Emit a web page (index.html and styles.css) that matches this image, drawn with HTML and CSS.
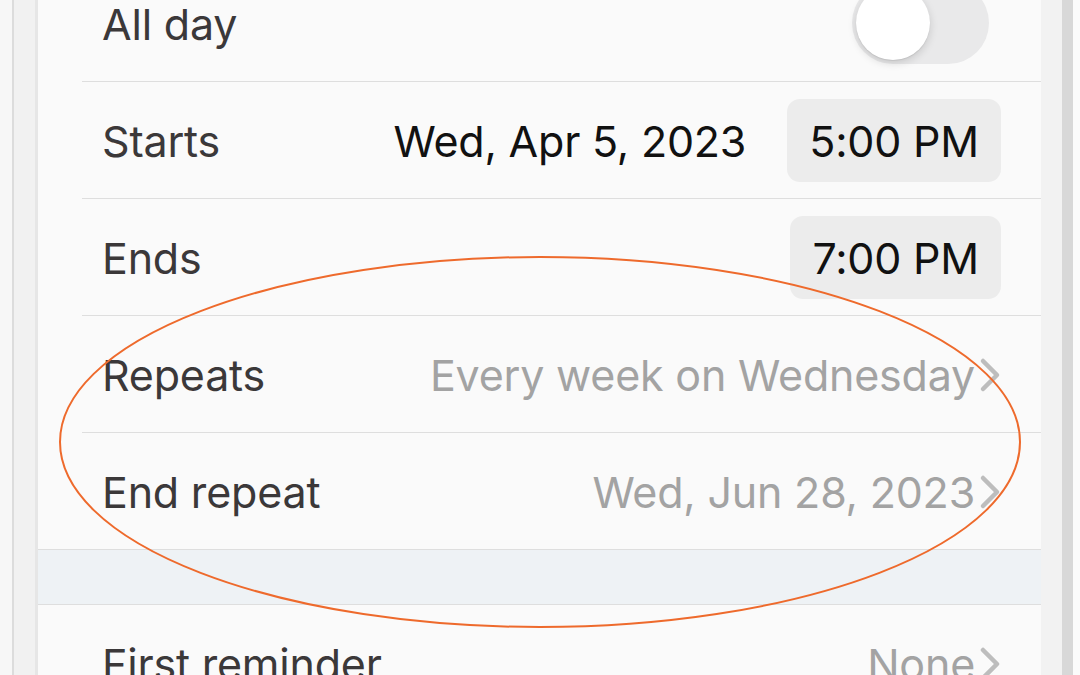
FILE: index.html
```html
<!DOCTYPE html>
<html lang="en">
<head>
    <meta charset="UTF-8">
    <meta name="viewport" content="width=device-width, initial-scale=1.0">
    <title>Event details</title>
    <link rel="stylesheet" href="styles.css">
</head>
<body>
    <div class="phone">
        <div class="frame frame-left">
            <div class="edge"></div>
            <div class="bezel"></div>
            <div class="rim"></div>
        </div>

        <div class="screen">
            <div class="group">
                <div class="row">
                    <span class="label">All day</span>
                    <div class="toggle"><div class="knob"></div></div>
                </div>
                <div class="row">
                    <span class="label">Starts</span>
                    <div class="values">
                        <span class="date">Wed, Apr 5, 2023</span>
                        <span class="pill">5:00 PM</span>
                    </div>
                </div>
                <div class="row">
                    <span class="label">Ends</span>
                    <div class="values">
                        <span class="pill">7:00 PM</span>
                    </div>
                </div>
                <div class="row">
                    <span class="label">Repeats</span>
                    <div class="values link">
                        <span class="text">Every week on Wednesday</span>
                        <svg class="chevron" viewBox="0 0 22 36"><path d="M4 4 L18 18 L4 32"/></svg>
                    </div>
                </div>
                <div class="row last">
                    <span class="label">End repeat</span>
                    <div class="values link">
                        <span class="text">Wed, Jun 28, 2023</span>
                        <svg class="chevron" viewBox="0 0 22 36"><path d="M4 4 L18 18 L4 32"/></svg>
                    </div>
                </div>
            </div>

            <div class="spacer"></div>

            <div class="group">
                <div class="row">
                    <span class="label">First reminder</span>
                    <div class="values link">
                        <span class="text">None</span>
                        <svg class="chevron" viewBox="0 0 22 36"><path d="M4 4 L18 18 L4 32"/></svg>
                    </div>
                </div>
            </div>
        </div>

        <div class="frame frame-right">
            <div class="bezel"></div>
            <div class="edge"></div>
            <div class="outer"></div>
        </div>
    </div>

    <!-- hand-drawn highlight around the repeat rows -->
    <svg class="highlight" viewBox="0 0 1080 675">
        <ellipse cx="540" cy="442" rx="480" ry="185"/>
    </svg>
</body>
</html>
```

FILE: styles.css
```css
body {
    margin: 0;
    padding: 0;
    background: #ffffff;
    font-family: 'Inter', 'Noto Sans', sans-serif;
    overflow: hidden;
    height: 675px;
}

.phone {
    display: flex;
    height: 675px;
}

/* phone frame strips */
.frame {
    display: flex;
    flex-shrink: 0;
}

.frame-left .edge {
    width: 12px;
    background: #f7f7f7;
    border-right: 2px solid #dcdcdc;
}

.frame-left .bezel {
    width: 21px;
    background: #f1f1f1;
}

.frame-left .rim {
    width: 3px;
    background: #e6e6e6;
}

.frame-right .bezel {
    width: 21px;
    background: #f2f2f2;
}

.frame-right .edge {
    width: 11px;
    background: #d8d8d8;
}

.frame-right .outer {
    width: 7px;
    background: #fbfbfb;
}

.screen {
    flex: 1;
    background: #fafafa;
    margin-top: -35px;
}

.row {
    display: flex;
    align-items: center;
    justify-content: space-between;
    height: 116px;
    margin-left: 44px;
    padding-left: 20px;
    padding-right: 40px;
    border-bottom: 1px solid #dedede;
}

.row.last {
    border-bottom: none;
}

.label {
    color: #3b3839;
    font-size: 43px;
    letter-spacing: -0.2px;
    padding-top: 2px;
}

.values {
    display: flex;
    align-items: center;
    gap: 41px;
    font-size: 43px;
    color: #111111;
}

.date,
.text {
    letter-spacing: -0.2px;
    padding-top: 2px;
}

.pill {
    background: #ececec;
    border-radius: 13px;
    height: 83px;
    box-sizing: border-box;
    padding: 2px 22px 0;
    display: flex;
    align-items: center;
    letter-spacing: -0.2px;
}

.values.link {
    gap: 4px;
    color: #a3a3a3;
}

.chevron {
    width: 22px;
    height: 36px;
    margin-top: 2px;
    fill: none;
    stroke: #bdbdbd;
    stroke-width: 4.5;
    stroke-linecap: round;
    stroke-linejoin: round;
}

.spacer {
    height: 54px;
    background: #eef2f5;
    border-top: 1px solid #dedede;
    border-bottom: 1px solid #dedede;
}

/* switch, off state */
.toggle {
    width: 137px;
    height: 82px;
    border-radius: 41px;
    background: #e9e9ea;
    margin-right: 12px;
    display: flex;
    align-items: center;
    padding-left: 4px;
    box-sizing: border-box;
}

.knob {
    width: 74px;
    height: 74px;
    border-radius: 50%;
    background: #ffffff;
    box-shadow: 0 3px 8px rgba(0, 0, 0, 0.15), 0 1px 1px rgba(0, 0, 0, 0.08);
}

.highlight {
    position: absolute;
    top: 0;
    left: 0;
    width: 1080px;
    height: 675px;
    pointer-events: none;
}

.highlight ellipse {
    fill: none;
    stroke: #ee6a2c;
    stroke-width: 2;
}
```
